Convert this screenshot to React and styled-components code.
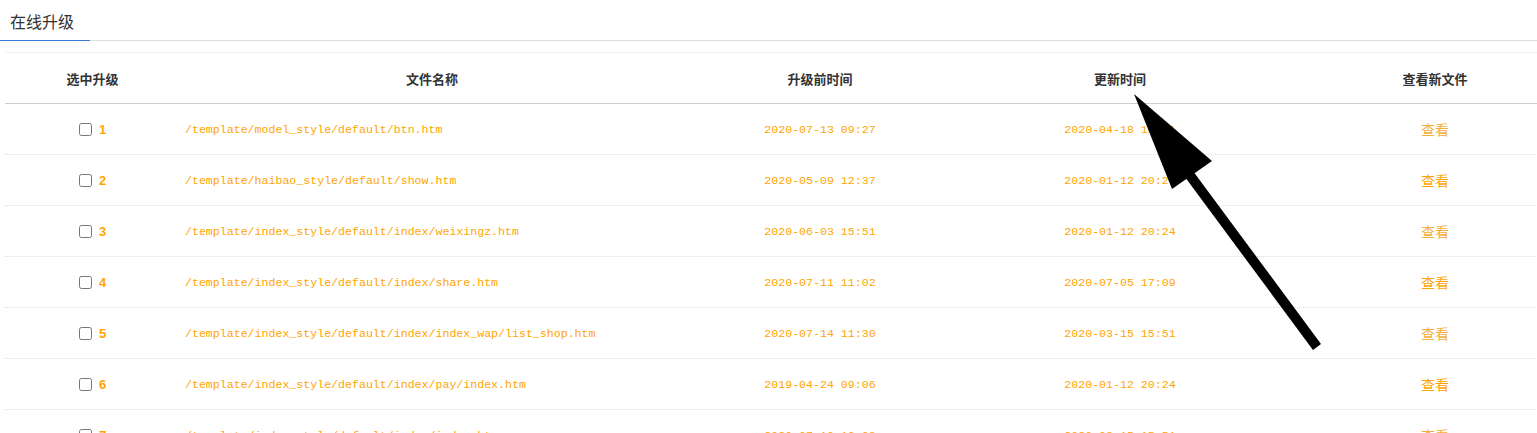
import React from 'react'
import styled, { createGlobalStyle } from 'styled-components'

const GlobalStyle = createGlobalStyle`
  html, body {
    margin: 0;
    padding: 0;
    background: #fff;
    overflow: hidden;
  }
  body {
    font-family: 'Noto Sans CJK SC', 'Noto Sans', sans-serif;
    color: #333;
  }
`

const rows = [
  { id: 1, path: '/template/model_style/default/btn.htm', before: '2020-07-13 09:27', after: '2020-04-18 15:51' },
  { id: 2, path: '/template/haibao_style/default/show.htm', before: '2020-05-09 12:37', after: '2020-01-12 20:24' },
  { id: 3, path: '/template/index_style/default/index/weixingz.htm', before: '2020-06-03 15:51', after: '2020-01-12 20:24' },
  { id: 4, path: '/template/index_style/default/index/share.htm', before: '2020-07-11 11:02', after: '2020-07-05 17:09' },
  { id: 5, path: '/template/index_style/default/index/index_wap/list_shop.htm', before: '2020-07-14 11:30', after: '2020-03-15 15:51' },
  { id: 6, path: '/template/index_style/default/index/pay/index.htm', before: '2019-04-24 09:06', after: '2020-01-12 20:24' },
  { id: 7, path: '/template/index_style/default/index/index.htm', before: '2020-07-10 10:03', after: '2020-03-15 15:51' },
]

const COLS = '175px 504px 272px 328px 302px'

const Page = styled.div`
  position: relative;
  width: 1537px;
  height: 433px;
  overflow: hidden;
`

const TabBar = styled.div`
  display: flex;
  border-bottom: 1px solid #ddd;
  height: 41px;
  box-sizing: border-box;
`

const Tab = styled.div`
  width: 90px;
  box-sizing: border-box;
  padding: 9px 0 0 10px;
  font-size: 16px;
  color: #333;
  border-bottom: 1px solid ${p => (p.active ? '#3a7bd5' : 'transparent')};
  margin-bottom: -1px;
`

const Table = styled.div`
  margin: 11px 0 0 5px;
  border-top: 1px solid #eee;
  width: 1581px;
`

const HeadRow = styled.div`
  display: grid;
  grid-template-columns: ${COLS};
  height: 50px;
  align-items: center;
  border-bottom: 1px solid #ccc;
`

const HeadCell = styled.div`
  text-align: center;
  font-size: 13px;
  font-weight: 700;
  color: #333;
`

const Row = styled.div`
  display: grid;
  grid-template-columns: ${COLS};
  height: 50px;
  align-items: center;
  border-bottom: 1px dotted #ddd;
`

const Cell = styled.div`
  text-align: ${p => p.align || 'center'};
  padding-left: ${p => (p.align === 'left' ? '5px' : '0')};
  font-family: 'Liberation Mono', 'DejaVu Sans Mono', monospace;
  font-size: 11.6px;
  color: #ffa500;
  white-space: nowrap;
`

const SelectCell = styled.label`
  display: flex;
  align-items: center;
  gap: 7px;
  padding-left: 74px;
`

const Check = styled.input`
  width: 13px;
  height: 13px;
  margin: 0;
`

const Num = styled.span`
  font-family: 'Liberation Sans', Arial, sans-serif;
  font-size: 13px;
  font-weight: 700;
  color: #ffa500;
`

const ViewLink = styled.a`
  font-family: 'Noto Sans CJK SC', sans-serif;
  font-size: 14px;
  color: ${p => (p.light ? '#f5ae3b' : '#ffa500')};
  text-decoration: none;
  cursor: pointer;
`

const Arrow = styled.svg`
  position: absolute;
  left: 0;
  top: 0;
  pointer-events: none;
`

export default function App() {
  return (
    <Page>
      <GlobalStyle />
      <TabBar>
        <Tab active>在线升级</Tab>
      </TabBar>
      <Table>
        <HeadRow>
          <HeadCell>选中升级</HeadCell>
          <HeadCell>文件名称</HeadCell>
          <HeadCell>升级前时间</HeadCell>
          <HeadCell>更新时间</HeadCell>
          <HeadCell>查看新文件</HeadCell>
        </HeadRow>
        {rows.map(r => (
          <Row key={r.id}>
            <SelectCell>
              <Check type='checkbox' />
              <Num>{r.id}</Num>
            </SelectCell>
            <Cell align='left'>{r.path}</Cell>
            <Cell>{r.before}</Cell>
            <Cell>{r.after}</Cell>
            <Cell>
              <ViewLink light={r.id % 2 === 1}>查看</ViewLink>
            </Cell>
          </Row>
        ))}
      </Table>
      {/* annotation arrow over the table */}
      <Arrow width='1537' height='433' viewBox='0 0 1537 433'>
        <polygon points='1134,94 1212,161 1172,189' fill='#000' />
        <line x1='1186' y1='170' x2='1317' y2='347' stroke='#000' strokeWidth='10' />
      </Arrow>
    </Page>
  )
}
